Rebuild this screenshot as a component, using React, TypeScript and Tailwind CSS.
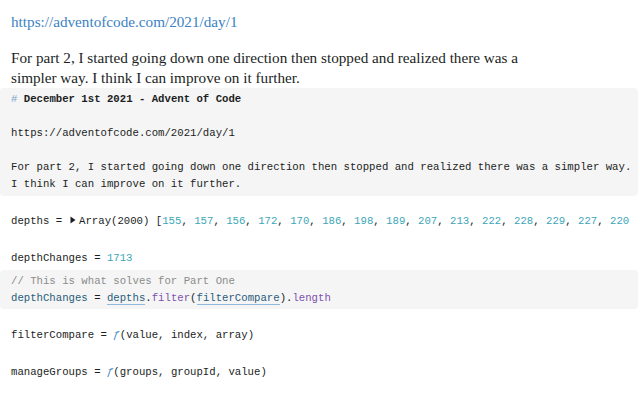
import React from "react";

const nums = [155, 157, 156, 172, 170, 186, 198, 189, 207, 213, 222, 228, 229, 227, 220];

const Caret = () => (
  <svg width="10" height="8" viewBox="0 0 10 8" className="inline-block align-baseline ml-[0.5px]">
    <path d="M1.5 0.5 L6.5 4 L1.5 7.5 Z" fill="#1b1e23" />
  </svg>
);

const Ref = ({ children }: { children: React.ReactNode }) => (
  <span className="text-[#2a5c7c] border-b border-[#8fb8dc]">{children}</span>
);

const App = () => {
  return (
    <div className="w-[640px] h-[400px] overflow-hidden bg-white text-[#1b1e23]">
      {/* markdown cell */}
      <div className="pt-[12px] px-[11px] font-['Liberation_Serif',serif] text-[15.2px] leading-[20px]">
        <a className="text-[#3b82c4]">https://adventofcode.com/2021/day/1</a>
        <p className="mt-[16px]">
          For part 2, I started going down one direction then stopped and realized there was a
          <br />
          simpler way. I think I can improve on it further.
        </p>
      </div>

      <div className="font-['Liberation_Mono',monospace] text-[10.67px] leading-[17px] whitespace-pre">
        <div className="mr-[2px] rounded-[4px] bg-[#f5f5f5] px-[11px] pt-[3px] pb-[3px]">
          <div>
            <span className="text-[#7aa3cc]">#</span> <span className="font-bold">December 1st 2021 - Advent of Code</span>
          </div>
          <div>&nbsp;</div>
          <div>https://adventofcode.com/2021/day/1</div>
          <div>&nbsp;</div>
          <div>For part 2, I started going down one direction then stopped and realized there was a simpler way.</div>
          <div>I think I can improve on it further.</div>
        </div>

        <div className="mt-[17px] px-[11px] overflow-hidden">
          depths = <Caret />Array(2000) [
          {nums.map((n, i) => (
            <React.Fragment key={i}>
              <span className="text-[#3ba7b8]">{n}</span>
              {i < nums.length - 1 ? ", " : ""}
            </React.Fragment>
          ))}
        </div>

        <div className="mt-[20px] px-[11px]">
          depthChanges = <span className="text-[#3ba7b8]">1713</span>
        </div>
        <div className="mt-[3px] mr-[2px] rounded-[4px] bg-[#f5f5f5] px-[11px] pt-[3px] pb-[2px]">
          <div className="text-[#8c8c8c]">// This is what solves for Part One</div>
          <div>
            <span className="text-[#2a5c7c]">depthChanges</span> = <Ref>depths</Ref>.
            <span className="text-[#7d52b0]">filter</span>(<Ref>filterCompare</Ref>).
            <span className="text-[#7d52b0]">length</span>
          </div>
        </div>

        <div className="mt-[18px] px-[11px]">
          filterCompare = <span className="italic text-[#3b82c4]">ƒ</span>(value, index, array)
        </div>
        <div className="mt-[20px] px-[11px]">
          manageGroups = <span className="italic text-[#3b82c4]">ƒ</span>(groups, groupId, value)
        </div>
      </div>
    </div>
  );
};

export default App;
